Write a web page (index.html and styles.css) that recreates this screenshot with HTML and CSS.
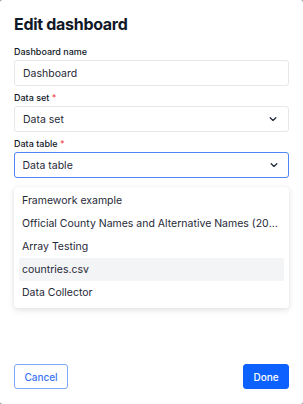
FILE: index.html
```html
<!DOCTYPE html>
<html lang="en">
<head>
    <meta charset="UTF-8">
    <meta name="viewport" content="width=device-width, initial-scale=1.0">
    <title>Edit dashboard</title>
    <link rel="stylesheet" href="styles.css">
</head>
<body>
    <div class="modal">
        <h1>Edit dashboard</h1>

        <div class="field">
            <label>Dashboard name</label>
            <div class="input">Dashboard</div>
        </div>

        <div class="field">
            <label>Data set <span class="req">*</span></label>
            <div class="input select">
                <span>Data set</span>
                <svg width="10" height="10" viewBox="0 0 10 10"><path d="M2.2 3.8 5 6.4 7.8 3.8" fill="none" stroke="#1f2937" stroke-width="1.3" stroke-linecap="round" stroke-linejoin="round"/></svg>
            </div>
        </div>

        <div class="field dropdown-wrap">
            <label>Data table <span class="req">*</span></label>
            <div class="input select focused">
                <span>Data table</span>
                <svg width="10" height="10" viewBox="0 0 10 10"><path d="M2.2 3.8 5 6.4 7.8 3.8" fill="none" stroke="#1f2937" stroke-width="1.3" stroke-linecap="round" stroke-linejoin="round"/></svg>
            </div>
            <ul class="menu">
                <li>Framework example</li>
                <li>Official County Names and Alternative Names (2020 Census)</li>
                <li>Array Testing</li>
                <li class="active">countries.csv</li>
                <li>Data Collector</li>
            </ul>
        </div>

        <div class="actions">
            <button class="btn btn-outline">Cancel</button>
            <button class="btn btn-primary">Done</button>
        </div>
    </div>
</body>
</html>
```

FILE: styles.css
```css
body {
    margin: 0;
    padding: 0;
    background-color: #9ca3af;
    font-family: Inter, "Noto Sans", sans-serif;
    color: #1f2937;
}

.modal {
    width: 303px;
    height: 404px;
    box-sizing: border-box;
    background-color: white;
    border-radius: 3px;
    padding: 14px 14px 15px 14px;
    display: flex;
    flex-direction: column;
}

h1 {
    margin: 0 0 12px 0;
    font-size: 16px;
    line-height: 20px;
    font-weight: 700;
    color: #111827;
    letter-spacing: -0.3px;
}

.field {
    margin-bottom: 6px;
}

.field label {
    display: block;
    font-size: 9px;
    line-height: 11px;
    font-weight: 500;
    margin-bottom: 3px;
    color: #111827;
}

.req {
    color: #f05252;
}

.input {
    height: 26px;
    box-sizing: border-box;
    border: 1px solid #e5e7eb;
    border-radius: 3px;
    padding: 0 8px;
    font-size: 10.5px;
    display: flex;
    align-items: center;
    color: #1f2937;
}

.select {
    justify-content: space-between;
}

.select svg {
    margin-right: 2px;
}

.focused {
    border: 1.5px solid #4f86f7;
    padding: 0 7.5px;
}

.dropdown-wrap {
    position: relative;
}

.menu {
    position: absolute;
    top: 100%;
    left: 0;
    right: 0;
    margin: 9px 0 0 0;
    padding: 2px 5px 4px 5px;
    list-style: none;
    background-color: white;
    border-radius: 3px;
    box-shadow: 0 2px 6px rgba(0, 0, 0, 0.12), 0 0 1px rgba(0, 0, 0, 0.1);
    z-index: 2;
}

.menu li {
    height: 23px;
    line-height: 23px;
    padding: 0 3px;
    font-size: 10.5px;
    white-space: nowrap;
    overflow: hidden;
    text-overflow: ellipsis;
    border-radius: 2px;
}

.menu li.active {
    background-color: #f3f4f6;
}

.actions {
    margin-top: auto;
    display: flex;
    justify-content: space-between;
}

.btn {
    height: 25px;
    border-radius: 3px;
    font-family: Inter, "Noto Sans", sans-serif;
    font-size: 10px;
    font-weight: 500;
    padding: 0;
    cursor: pointer;
}

.btn-outline {
    background-color: white;
    border: 1px solid #7fa7f8;
    color: #3b74f4;
    width: 54px;
}

.btn-primary {
    background-color: #0d62ff;
    border: 1px solid #0d62ff;
    color: white;
    width: 46px;
}
```
